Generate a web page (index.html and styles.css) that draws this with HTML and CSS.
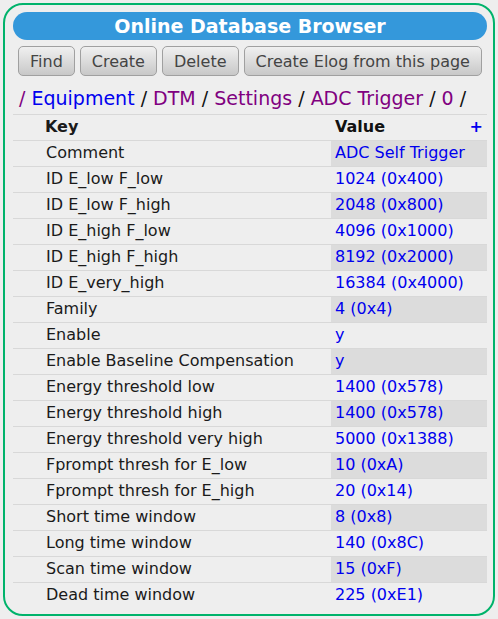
FILE: index.html
```html
<!DOCTYPE html>
<html>
<head>
<meta charset="utf-8">
<link rel="stylesheet" href="styles.css">
</head>
<body>
<div class="frame">
  <div class="title">Online Database Browser</div>
  <div class="toolbar">
    <button class="btn">Find</button>
    <button class="btn">Create</button>
    <button class="btn">Delete</button>
    <button class="btn">Create Elog from this page</button>
  </div>
  <div class="crumbs"><span class="visited">/</span> <a class="link">Equipment</a> / <span class="visited">DTM</span> / <span class="visited">Settings</span> / <span class="visited">ADC Trigger</span> / <span class="visited">0</span> /</div>
  <table class="odb">
    <thead>
      <tr><th class="key">Key</th><th class="val">Value<span class="plus">+</span></th></tr>
    </thead>
    <tbody>
      <tr><td class="key">Comment</td><td class="val">ADC Self Trigger</td></tr>
      <tr><td class="key">ID E_low F_low</td><td class="val">1024 (0x400)</td></tr>
      <tr><td class="key">ID E_low F_high</td><td class="val">2048 (0x800)</td></tr>
      <tr><td class="key">ID E_high F_low</td><td class="val">4096 (0x1000)</td></tr>
      <tr><td class="key">ID E_high F_high</td><td class="val">8192 (0x2000)</td></tr>
      <tr><td class="key">ID E_very_high</td><td class="val">16384 (0x4000)</td></tr>
      <tr><td class="key">Family</td><td class="val">4 (0x4)</td></tr>
      <tr><td class="key">Enable</td><td class="val">y</td></tr>
      <tr><td class="key">Enable Baseline Compensation</td><td class="val">y</td></tr>
      <tr><td class="key">Energy threshold low</td><td class="val">1400 (0x578)</td></tr>
      <tr><td class="key">Energy threshold high</td><td class="val">1400 (0x578)</td></tr>
      <tr><td class="key">Energy threshold very high</td><td class="val">5000 (0x1388)</td></tr>
      <tr><td class="key">Fprompt thresh for E_low</td><td class="val">10 (0xA)</td></tr>
      <tr><td class="key">Fprompt thresh for E_high</td><td class="val">20 (0x14)</td></tr>
      <tr><td class="key">Short time window</td><td class="val">8 (0x8)</td></tr>
      <tr><td class="key">Long time window</td><td class="val">140 (0x8C)</td></tr>
      <tr><td class="key">Scan time window</td><td class="val">15 (0xF)</td></tr>
      <tr><td class="key">Dead time window</td><td class="val">225 (0xE1)</td></tr>
    </tbody>
  </table>
</div>
</body>
</html>
```
FILE: styles.css
```css
html, body {
  margin: 0;
  padding: 0;
  background: #eeeeee;
}
body {
  font-family: "DejaVu Sans", sans-serif;
  font-size: 16px;
  color: #1a1a1a;
}
.frame {
  margin: 3px;
  border: 2px solid #00b36b;
  border-radius: 20px;
  padding: 7px 6px 6px 8px;
  height: 613px;
  box-sizing: border-box;
  background: #eeeeee;
}
.title {
  height: 28px;
  line-height: 28px;
  border-radius: 14px;
  background: #3498db;
  color: #ffffff;
  font-weight: bold;
  font-size: 19px;
  text-align: center;
}
.toolbar {
  display: flex;
  gap: 5px;
  margin-top: 6px;
  padding-left: 5px;
}
.btn {
  height: 30px;
  padding: 0 11px;
  font-family: "DejaVu Sans", sans-serif;
  font-size: 16px;
  color: #444444;
  border: 1px solid #a0a0a0;
  border-radius: 5px;
  background: linear-gradient(#f0f0f0, #c8c8c8);
}
.crumbs {
  margin-top: 11px;
  padding-left: 6px;
  height: 27px;
  font-size: 19px;
  color: #111111;
}
.link { color: #0000ee; }
.visited { color: #800080; }
.odb {
  width: 100%;
  border-collapse: collapse;
}
.odb th, .odb td {
  height: 23px;
  padding: 0 4px 2px 4px;
  border-top: 1px solid #d8d8d8;
  text-align: left;
  vertical-align: middle;
}
.odb th {
  font-weight: bold;
  color: #111111;
}
.odb .key {
  padding-left: 33px;
  color: #1a1a1a;
}
.odb th.key { padding-left: 32px; }
.odb .val {
  width: 148px;
  color: #0000ee;
}
.odb th.val { color: #111111; }
.odb tbody tr:nth-child(odd) .val {
  background: #dcdcdc;
}
.plus {
  float: right;
  color: #0000ee;
  font-weight: bold;
  padding-right: 0;
}
```
